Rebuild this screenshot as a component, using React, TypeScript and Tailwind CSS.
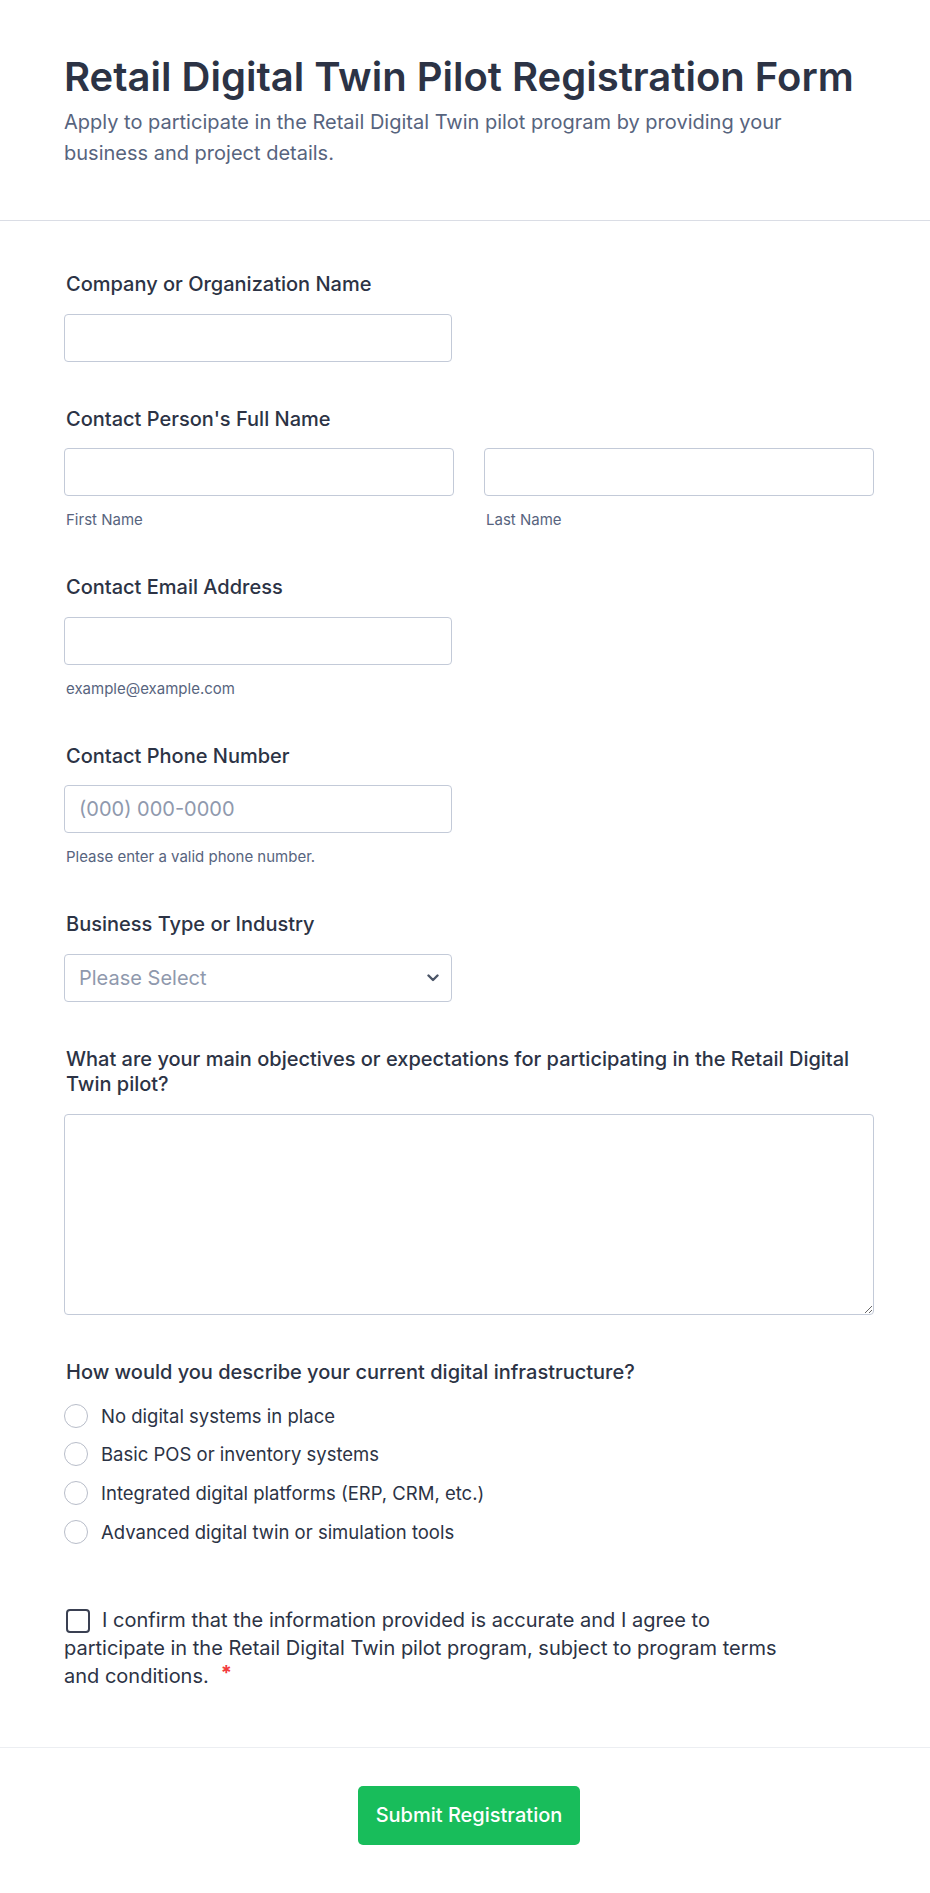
import React from 'react';

const labelCls = 'block pl-[2px] text-[20px] leading-[25px] font-medium text-[#2c3345]';
const inputCls =
  'block h-[48px] rounded-[4px] border border-[#c3cad8] bg-white px-[14px] text-[20px] text-[#2c3345] placeholder:text-[#8f99ad] outline-none';
const subCls = 'mt-[14px] pl-[2px] text-[15px] leading-[20px] text-[#57647e]';

const options = [
  'No digital systems in place',
  'Basic POS or inventory systems',
  'Integrated digital platforms (ERP, CRM, etc.)',
  'Advanced digital twin or simulation tools',
];

export default function App() {
  return (
    <div className="min-h-screen bg-white font-['Inter',sans-serif] text-[#2c3345]">
      {/* Header */}
      <header className="pl-16 pr-14 pt-[53px] pb-[52px] border-b border-[#dadde5]">
        <h1 className="text-[40px] leading-[48px] font-semibold text-[#2c3345]">
          Retail Digital Twin Pilot Registration Form
        </h1>
        <p className="mt-[6px] max-w-[760px] text-[20px] leading-[30.6px] text-[#57647e]">
          Apply to participate in the Retail Digital Twin pilot program by providing your business and project details.
        </p>
      </header>

      {/* Fields */}
      <div className="pl-16 pr-14 pt-[51px]">
        <div className="flex flex-col gap-[45px]">
          <div>
            <label className={labelCls}>Company or Organization Name</label>
            <input type="text" className={`${inputCls} mt-[16.5px] w-[388px]`} />
          </div>

          <div>
            <label className={labelCls}>Contact Person's Full Name</label>
            <div className="mt-[16.5px] grid grid-cols-2 gap-[30px]">
              <div>
                <input type="text" className={`${inputCls} w-full`} />
                <div className={subCls}>First Name</div>
              </div>
              <div>
                <input type="text" className={`${inputCls} w-full`} />
                <div className={subCls}>Last Name</div>
              </div>
            </div>
          </div>

          <div>
            <label className={labelCls}>Contact Email Address</label>
            <input type="email" className={`${inputCls} mt-[16.5px] w-[388px]`} />
            <div className={subCls}>example@example.com</div>
          </div>

          <div>
            <label className={labelCls}>Contact Phone Number</label>
            <input type="tel" placeholder="(000) 000-0000" className={`${inputCls} mt-[16.5px] w-[388px]`} />
            <div className={subCls}>Please enter a valid phone number.</div>
          </div>

          <div>
            <label className={labelCls}>Business Type or Industry</label>
            <div className="mt-[16.5px] flex h-[48px] w-[388px] items-center justify-between rounded-[4px] border border-[#c3cad8] bg-white pl-[14px] pr-[12px]">
              <span className="text-[20px] text-[#8f99ad]">Please Select</span>
              <svg width="12" height="8" viewBox="0 0 12 8" fill="none">
                <path d="M1.5 1.5 6 6l4.5-4.5" stroke="#4b5567" strokeWidth="2.4" strokeLinecap="round" strokeLinejoin="round" />
              </svg>
            </div>
          </div>

          <div>
            <label className={labelCls}>
              What are your main objectives or expectations for participating in the Retail Digital Twin pilot?
            </label>
            <textarea className="mt-[17.5px] block h-[201px] w-full rounded-[4px] border border-[#c3cad8] bg-white p-[14px] text-[20px] outline-none" />
          </div>

          <div>
            <label className={labelCls}>How would you describe your current digital infrastructure?</label>
            <div className="mt-[18.5px] flex flex-col gap-[14.7px]">
              {options.map((o) => (
                <div key={o} className="flex h-6 items-center gap-[13px]">
                  <span className="h-6 w-6 shrink-0 rounded-full border border-[#b8bdc9] bg-white" />
                  <span className="text-[18.5px] leading-6 text-[#2c3345]">{o}</span>
                </div>
              ))}
            </div>
          </div>
        </div>

        {/* Consent */}
        <p className="mt-[62px] max-w-[728px] text-[20px] leading-[28px] text-[#2c3345]">
          <span className="ml-[2px] mr-[12px] inline-block h-6 w-6 rounded-[4px] border-2 border-[#3a4052] bg-white align-[-6px]" />
          I confirm that the information provided is accurate and I agree to participate in the Retail Digital Twin pilot
          program, subject to program terms and conditions.
          <span className="relative top-[-3px] ml-[12px] inline-block text-[20px] leading-none font-bold text-[#f23a3c]">*</span>
        </p>
      </div>

      {/* Footer */}
      <div className="mt-[57px] border-t border-[#eceef2] pl-16 pr-14 pt-[38px] pb-[49px] flex justify-center">
        <button className="h-[59px] w-[222px] rounded-[5px] bg-[#18bd5b] text-[20px] font-medium text-white">
          Submit Registration
        </button>
      </div>
    </div>
  );
}
